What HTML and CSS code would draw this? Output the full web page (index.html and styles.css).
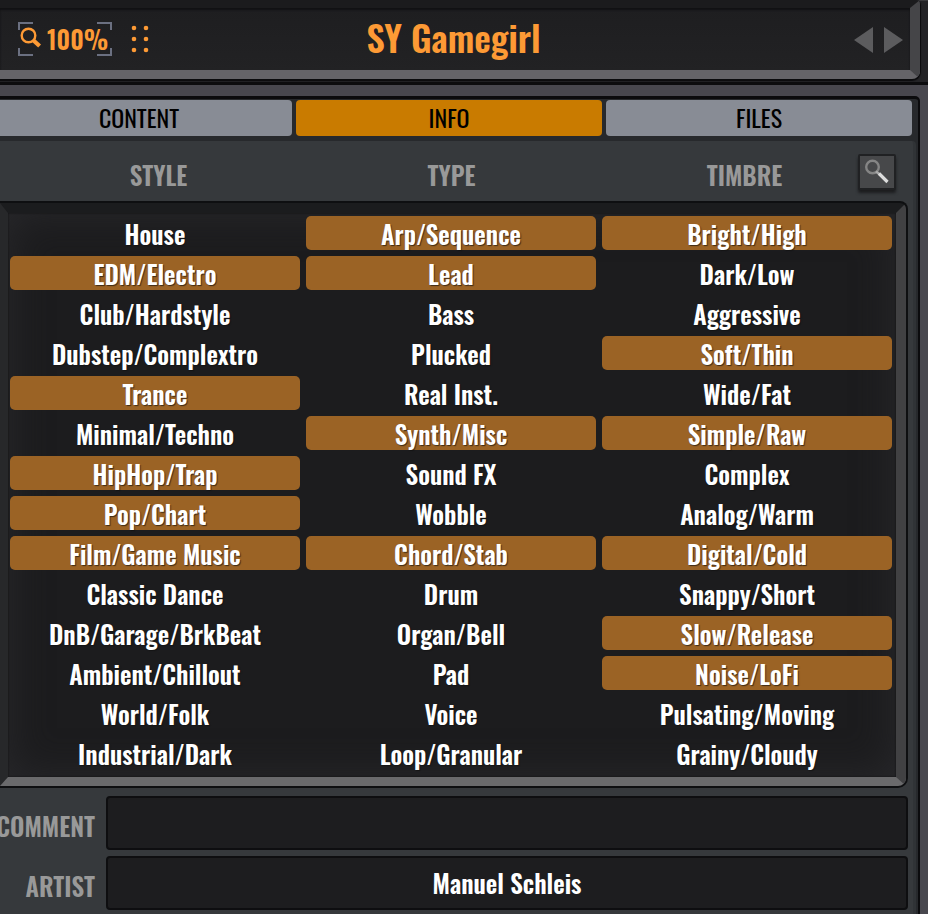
FILE: index.html
```
<!DOCTYPE html>
<html lang="en">
<head>
    <meta charset="utf-8">
    <title>SY Gamegirl</title>
    <link rel="stylesheet" href="styles.css">
</head>
<body>
    <header class="display">
        <div class="screen">
            <div class="tools">
                <button class="zoom" type="button">
                    <svg class="corners" width="94" height="34" viewBox="0 0 94 34" aria-hidden="true">
                        <path d="M1 8V1H15M79 1H93V8M93 26V33H79M15 33H1V26"/>
                    </svg>
                    <svg class="lens" width="22" height="22" viewBox="0 0 22 22" aria-hidden="true">
                        <circle cx="8.5" cy="8.5" r="6.8" stroke-width="2.4"/>
                        <path d="M13 13L19.6 19" stroke-width="4.2"/>
                    </svg>
                    100%
                </button>
                <button class="dots" type="button" aria-label="Menu">
                    <svg width="18" height="28" viewBox="0 0 18 28">
                        <circle cx="3" cy="3" r="2.3"/><circle cx="15" cy="3" r="2.3"/>
                        <circle cx="3" cy="14" r="2.3"/><circle cx="15" cy="14" r="2.3"/>
                        <circle cx="3" cy="25" r="2.3"/><circle cx="15" cy="25" r="2.3"/>
                    </svg>
                </button>
            </div>
            <h1>SY Gamegirl</h1>
            <div class="arrows">
                <button type="button" aria-label="Previous">
                    <svg width="19" height="26" viewBox="0 0 19 26"><path d="M0 13L19 0V26Z"/></svg>
                </button>
                <button type="button" aria-label="Next">
                    <svg width="19" height="26" viewBox="0 0 19 26"><path d="M19 13L0 0V26Z"/></svg>
                </button>
            </div>
        </div>
    </header>

    <main class="browser">
        <nav class="tabs">
            <button type="button">CONTENT</button>
            <button type="button" class="active">INFO</button>
            <button type="button">FILES</button>
        </nav>

        <div class="panel">
            <div class="heads">
                <h2>STYLE</h2>
                <h2>TYPE</h2>
                <h2>TIMBRE</h2>
                <button class="search" type="button" aria-label="Search">
                    <svg width="26" height="26" viewBox="0 0 26 26">
                        <circle cx="8.5" cy="8" r="6.3" stroke="#858585" stroke-width="2.4"/>
                        <path d="M12 12.5L17 16.5" stroke="#aaaaaa" stroke-width="2.4"/>
                        <path d="M15 14.5L23.5 23" stroke="#dddddd" stroke-width="3.2"/>
                    </svg>
                </button>
            </div>

            <div class="tags">
                <div class="column">
                    <button type="button">House</button>
                    <button type="button" class="on">EDM/Electro</button>
                    <button type="button">Club/Hardstyle</button>
                    <button type="button">Dubstep/Complextro</button>
                    <button type="button" class="on">Trance</button>
                    <button type="button">Minimal/Techno</button>
                    <button type="button" class="on">HipHop/Trap</button>
                    <button type="button" class="on">Pop/Chart</button>
                    <button type="button" class="on">Film/Game Music</button>
                    <button type="button">Classic Dance</button>
                    <button type="button">DnB/Garage/BrkBeat</button>
                    <button type="button">Ambient/Chillout</button>
                    <button type="button">World/Folk</button>
                    <button type="button">Industrial/Dark</button>
                </div>
                <div class="column">
                    <button type="button" class="on">Arp/Sequence</button>
                    <button type="button" class="on">Lead</button>
                    <button type="button">Bass</button>
                    <button type="button">Plucked</button>
                    <button type="button">Real Inst.</button>
                    <button type="button" class="on">Synth/Misc</button>
                    <button type="button">Sound FX</button>
                    <button type="button">Wobble</button>
                    <button type="button" class="on">Chord/Stab</button>
                    <button type="button">Drum</button>
                    <button type="button">Organ/Bell</button>
                    <button type="button">Pad</button>
                    <button type="button">Voice</button>
                    <button type="button">Loop/Granular</button>
                </div>
                <div class="column">
                    <button type="button" class="on">Bright/High</button>
                    <button type="button">Dark/Low</button>
                    <button type="button">Aggressive</button>
                    <button type="button" class="on">Soft/Thin</button>
                    <button type="button">Wide/Fat</button>
                    <button type="button" class="on">Simple/Raw</button>
                    <button type="button">Complex</button>
                    <button type="button">Analog/Warm</button>
                    <button type="button" class="on">Digital/Cold</button>
                    <button type="button">Snappy/Short</button>
                    <button type="button" class="on">Slow/Release</button>
                    <button type="button" class="on">Noise/LoFi</button>
                    <button type="button">Pulsating/Moving</button>
                    <button type="button">Grainy/Cloudy</button>
                </div>
            </div>

            <div class="fields">
                <label for="comment">COMMENT</label>
                <input id="comment" type="text">
                <label for="artist">ARTIST</label>
                <input id="artist" type="text" value="Manuel Schleis">
            </div>
        </div>
    </main>
</body>
</html>
```
FILE: styles.css
```
* { box-sizing: border-box; }
body {
    margin: 0;
    background: #48474e;
    font-family: Oswald, "Liberation Sans Narrow", "Roboto Condensed", "Liberation Sans", sans-serif;
    overflow: hidden;
}
button {
    border: none;
    padding: 0;
    background: none;
    font-family: inherit;
    cursor: pointer;
}
svg { display: block; }
h1, h2 { margin: 0; }

/* top display */
.display {
    padding-right: 8px;
    background: #232326;
    border-bottom: 3px solid #0c0c0e;
    box-shadow: inset 0 1px 0 #3a3a3d;
}
.screen {
    display: grid;
    grid-template-columns: 1fr auto 1fr;
    align-items: center;
    height: 79px;
    margin-bottom: 3px;
    padding: 0 7px 0 18px;
    border-style: solid;
    border-width: 8px 10px 9px 0;
    border-color: #1b1b1d #454548 #656468 #1b1b1d;
    border-radius: 0 4px 8px 0;
    background: linear-gradient(#1e1e20, #222224);
    box-shadow: inset 0 2px 2px #111113, 0 1px 1px 1px #0b0b0d;
}
.tools { display: flex; align-items: center; gap: 19px; }
.zoom {
    position: relative;
    display: flex;
    align-items: center;
    gap: 5px;
    width: 94px;
    height: 34px;
    padding: 0 0 2px 2px;
    color: #fd9a35;
    font-size: 25px;
    font-weight: 600;
}
.corners { position: absolute; top: 0; left: 0; fill: none; stroke: #6b7081; stroke-width: 2; }
.lens { flex: none; fill: none; stroke: #fd9a35; }
.dots svg { fill: #fd9a35; }
.screen h1 {
    padding: 0 14px 4px 0;
    color: #fd9a35;
    font-size: 36px;
    font-weight: 600;
    line-height: 44px;
}
.arrows { display: flex; justify-content: flex-end; gap: 11px; padding-top: 2px; }
.arrows svg { fill: #5c5c5e; }

/* preset browser */
.browser {
    margin: 11px 8px 0 0;
    padding-right: 2px;
    border-top: 3px solid #0b0b0d;
    border-right: 2px solid #0b0b0d;
    border-radius: 0 5px 0 0;
    background: #27292c;
}
.tabs {
    display: grid;
    grid-template-columns: repeat(3, 1fr);
    gap: 4px;
    margin: 0 4px 0 -14px;
    padding: 1px 0 5px;
}
.tabs button {
    height: 36px;
    padding-bottom: 2px;
    border-radius: 4px;
    background: #888c95;
    color: #000;
    font-size: 24px;
    line-height: 34px;
}
.tabs .active { background: #c97b00; }

.panel {
    padding-right: 5px;
    border-right: 3px solid #303336;
    border-radius: 0 4px 0 0;
    background: #36393c;
}
.heads {
    position: relative;
    display: grid;
    grid-template-columns: repeat(3, 1fr);
    align-items: center;
    height: 62px;
    padding: 6px 17px 0 12px;
}
.heads h2 { color: #999; font-size: 25px; font-weight: 600; line-height: 32px; text-align: center; }
.search {
    position: absolute;
    top: 13px;
    right: 12px;
    display: grid;
    place-items: center;
    width: 38px;
    height: 36px;
    border: 2px solid #202123;
    border-radius: 2px;
    background: #47484a;
    box-shadow: 0 3px 3px #1c1d1f;
}
.search svg { fill: none; }

.tags {
    display: grid;
    grid-template-columns: repeat(3, 1fr);
    gap: 6px;
    margin-right: 2px;
    padding: 3px 4px 7px 2px;
    border-style: solid;
    border-width: 10px 10px 9px 8px;
    border-color: #1b1c1e #414143 #6a6a6c #27282a;
    border-radius: 0 6px 8px 0;
    background: #1c1c1e;
    box-shadow: inset 0 0 2px #0c0c0e, inset 0 0 40px #29292c, 0 0 0 2px #0e0f11;
}
.column { display: grid; gap: 6px; }
.column button {
    height: 34px;
    padding-top: 2px;
    border-radius: 5px;
    color: #fff;
    font-size: 25px;
    font-weight: 600;
    line-height: 32px;
    text-shadow: 1px 1px 1px #111a;
}
.column .on { background: #9b6325; }

/* comment and artist */
.fields {
    display: grid;
    grid-template-columns: 95px 1fr;
    align-items: center;
    gap: 6px 11px;
    padding: 10px 0 5px;
}
.fields label {
    display: flex;
    justify-content: flex-end;
    padding-top: 4px;
    color: #999;
    font-size: 25px;
    font-weight: 600;
}
.fields input {
    width: 100%;
    height: 54px;
    padding: 0 2px 2px;
    border: 2px solid #0e0e10;
    border-radius: 4px;
    background: #1d1d1f;
    color: #fff;
    font-family: inherit;
    font-size: 25px;
    font-weight: 600;
    text-align: center;
}
```
